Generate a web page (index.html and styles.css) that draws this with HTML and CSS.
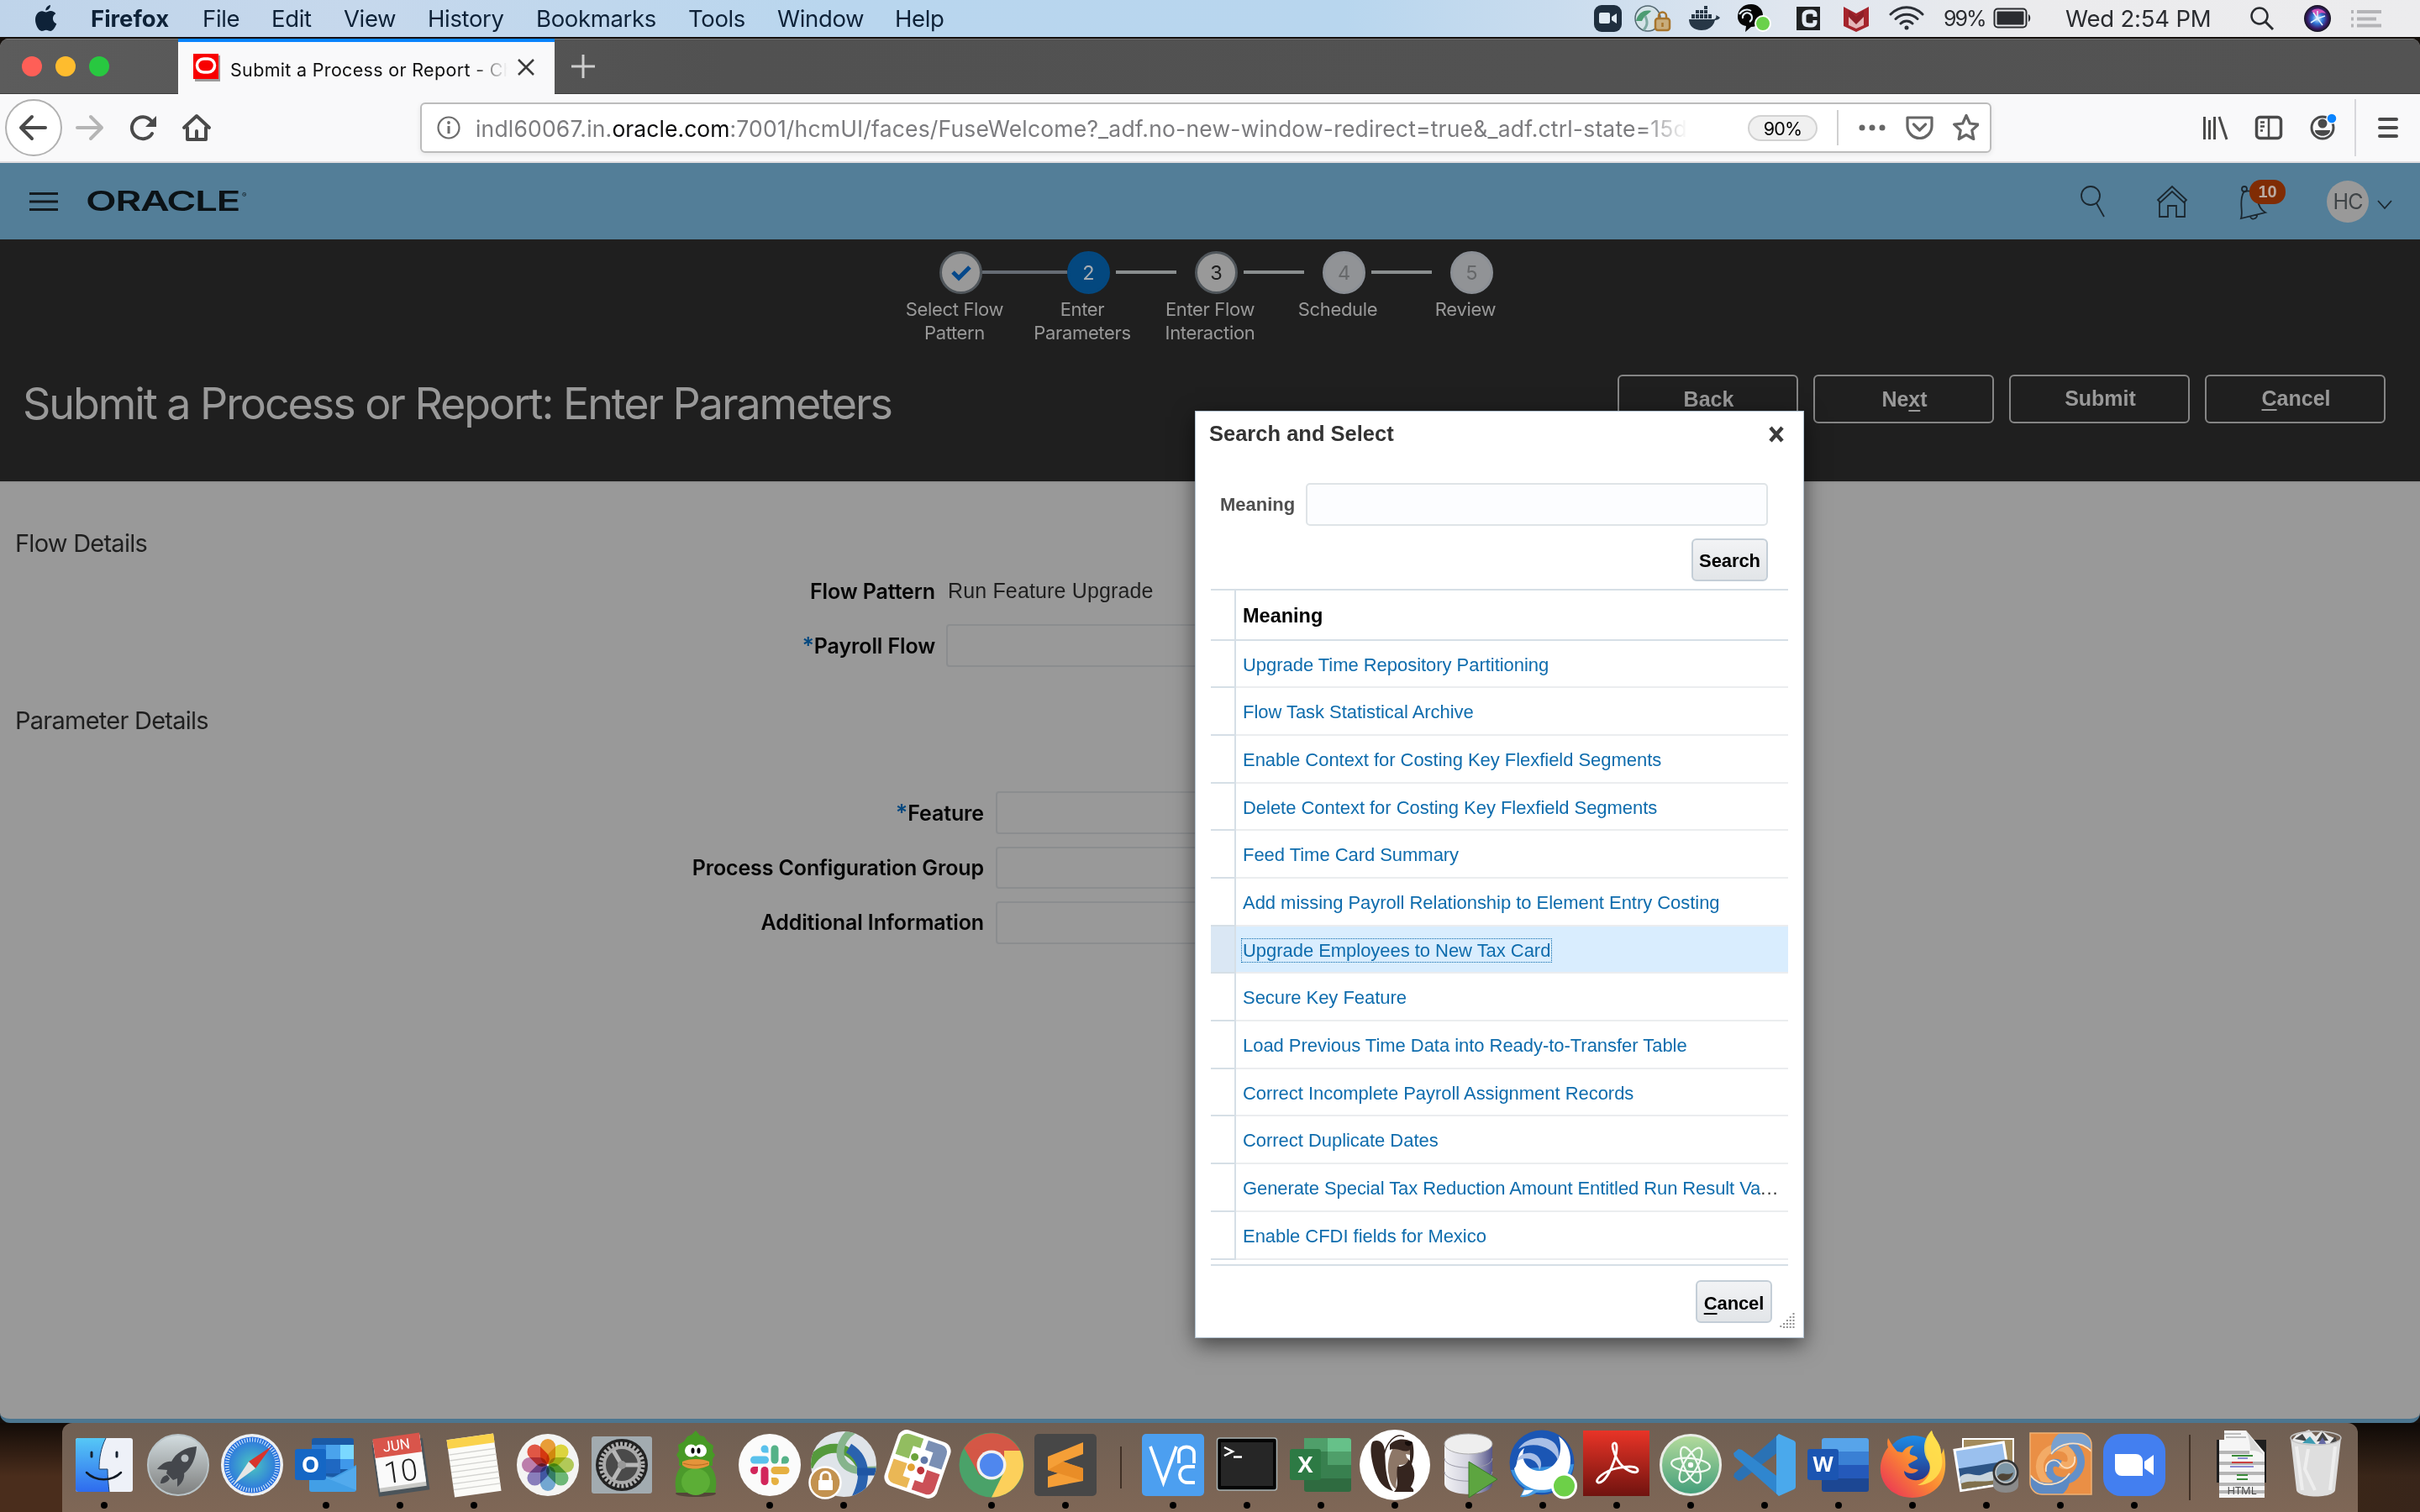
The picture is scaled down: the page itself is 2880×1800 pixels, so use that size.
FILE: index.html
```html
<!DOCTYPE html>
<html lang="en">
<head>
<meta charset="utf-8">
<title>Submit a Process or Report</title>
<link rel="stylesheet" href="styles.css">
</head>
<body>
<div class="desktop">

  <header class="menubar">
    <nav class="menus">
      <svg class="apple" width="28" height="34" viewBox="0 0 28 34"><path d="M19 1c.3 3-2.600 6.500-5.600 6.400C13 4.500 16 1.300 19 1zM13.800 9.600c1.300 0 3-1.600 5.600-1.500 2.500.1 4.600 1.200 5.900 3.200-5 3-4.200 10 1 12-1.500 4-4.200 8.600-7.200 8.700-2 0-2.700-1.300-5.200-1.300S10.600 32 8.800 32C4.800 32 1 24.500 1 18.600 1 12 5 8.400 9 8.300c2 0 3.600 1.300 4.800 1.300z" fill="#0e2238"/></svg>
      <b>Firefox</b><span>File</span><span>Edit</span><span>View</span><span>History</span><span>Bookmarks</span><span>Tools</span><span>Window</span><span>Help</span>
    </nav>
    <svg class="tray" width="400" height="44" viewBox="0 0 400 44">
      <rect x="7" y="6" width="33" height="32" rx="9" fill="#1f2f3f"/><rect x="13" y="15" width="13" height="13" rx="2" fill="#dfeaf3"/><path d="M28 20l6-4v12l-6-4z" fill="#dfeaf3"/>
      <circle cx="71" cy="22" r="15" fill="#d5e3e8" stroke="#52666f" stroke-width="1.500"/><path d="M57 25c2-9 9-14 18-12-3 4-8 5-11 12z" fill="#4d9c73"/><path d="M66 36c5-6 5-10 2-17" stroke="#7fa9a2" stroke-width="3" fill="none"/><rect x="80" y="22" width="17" height="14" rx="3" fill="#c8ad7c" stroke="#a8752c" stroke-width="2.500"/><path d="M84 22v-3a4.500 4.500 0 0 1 9 0v3M88.500 27v5" fill="none" stroke="#a8752c" stroke-width="2.500"/>
      <path d="M120 23h29c3 0 4-3 3-5 3 1 5 3 5 3-1 2-4 3-6 3-2 8-8 12-16 12-9 0-15-5-15-13zM123 17h4v5h-4zM128 17h4v5h-4zM133 17h4v5h-4zM138 17h4v5h-4zM143 17h4v5h-4zM128 12h4v4h-4zM133 12h4v4h-4zM138 12h4v4h-4zM138 7h4v4h-4z" fill="#273746"/>
      <path d="M178 20c0-9 7-15 16-15 8 0 14 6 14 13 0 8-6 14-14 14l-7 6 1-7c-6-1-10-5-10-11z" fill="#050505"/><path d="M180 17c3-5 9-7 14-4M184 22c-1-5 4-8 8-6s4 8 0 10" fill="none" stroke="#e3edf5" stroke-width="2"/><circle cx="208" cy="28" r="9" fill="#6ad14b" stroke="#fff" stroke-width="2"/>
      <path d="M248 8h28v28h-28z" fill="#1f2122"/><path d="M270 20v-3c0-2-2-3-4-3h-3c-4 0-6 2-6 5v6c0 3 2 5 6 5h3c2 0 4-1 4-3v-3" fill="none" stroke="#e4ebf3" stroke-width="5"/>
      <path d="M304 8l15 8 15-8v23l-15 7-15-7z" fill="#a5242c"/><path d="M310 17l9 7 9-7v13l-9 4-9-4z" fill="#e4b6b8"/><path d="M310 12l9 8 9-8v8l-9 9-9-9z" fill="#8f1f27"/>
      <g fill="none" stroke="#2b2f36" stroke-width="3" stroke-linecap="round"><path d="M360 17c11-11 27-11 38 0M366 22.500c7-7 19-7 26 0M372 28c4-4 10-4 14 0"/></g><circle cx="379" cy="33" r="2.500" fill="#2b2f36"/>
    </svg>
    <span class="pct">99%</span>
    <svg class="battery" width="46" height="26" viewBox="0 0 46 26"><rect x="1.500" y="1.500" width="38" height="22" rx="4" fill="none" stroke="#2a2c30" stroke-width="2"/><rect x="4.500" y="4.500" width="32" height="16" rx="1" fill="#2a2c30"/><path d="M42 8c3 1 3 8 0 9z" fill="#2a2c30"/></svg>
    <span class="clock">Wed 2:54 PM</span>
    <svg class="tray-end" width="170" height="44" viewBox="0 0 170 44"><circle cx="20" cy="19" r="9.500" fill="none" stroke="#2a2c30" stroke-width="2.500"/><path d="M27 26l9 9" stroke="#2a2c30" stroke-width="3"/>
      <defs><radialGradient id="siri"><stop offset="0" stop-color="#d9f4ff"/><stop offset=".4" stop-color="#2f76d8"/><stop offset=".75" stop-color="#3a1c6a"/><stop offset="1" stop-color="#14141c"/></radialGradient></defs>
      <circle cx="89" cy="22" r="16" fill="url(#siri)"/><path d="M82 13c6-5 14-2 17 3-6-2-10 0-10 6z" fill="#d053b8"/><path d="M89 22l6 8M89 22l-8 5M89 22l-5-7M89 22l9-3M89 22v-9" stroke="#dff2ff" stroke-width="1.500"/>
      <path d="M129 12h3v4h-3zM129 20.500h3v4h-3zM129 28.500h3v4h-3zM136 12h29v4h-29zM136 20.500h23v4h-23zM136 28.500h29v4h-29z" fill="#b4b4b7"/></svg>
  </header>

  <main class="window">
    <div class="tabbar">
      <div class="lights"><i class="red"></i><i class="amber"></i><i class="green"></i></div>
      <div class="tab">
        <svg width="32" height="34" viewBox="0 0 32 34"><path d="M2 2h30v31H2z" fill="#9c9c9c"/><path d="M0 0h30v30H0z" fill="#f80000"/><rect x="4.500" y="6" width="21" height="16" rx="8" fill="none" stroke="#fff" stroke-width="3.500"/></svg>
        <span class="tab-title">Submit a Process or Report - Ch</span>
        <svg class="tab-close" width="22" height="22" viewBox="0 0 22 22"><path d="M2 2l18 18M20 2L2 20" stroke="#3c3c3c" stroke-width="2.500"/></svg>
      </div>
      <svg class="plus" width="30" height="30" viewBox="0 0 30 30"><path d="M15 1v28M1 15h28" stroke="#cdcdcd" stroke-width="3"/></svg>
    </div>

    <div class="navbar">
      <svg class="nav-left" width="270" height="80" viewBox="0 0 270 80" fill="none" stroke="#4a4a4a" stroke-width="4" stroke-linecap="round" stroke-linejoin="round">
        <circle cx="40" cy="40" r="33" fill="#fff" stroke="#b1b1b1" stroke-width="2"/>
        <path d="M54 40H26M38 27L25 40l13 13"/>
        <path d="M92 40h28M108 27l13 13-13 13" stroke="#b5b5b5"/>
        <path d="M181 47a13 13 0 1 1-1-15"/><path d="M186 26v13h-13z" fill="#4a4a4a" stroke="none"/>
        <path d="M219 40l15-14 15 14M223 40v14h22V40M234 54v-10"/>
      </svg>
      <div class="urlbar">
        <svg width="30" height="30" viewBox="0 0 30 30"><circle cx="15" cy="15" r="12.500" fill="none" stroke="#6d6d6d" stroke-width="2.200"/><circle cx="15" cy="9" r="1.900" fill="#6d6d6d"/><path d="M15 13v9" stroke="#6d6d6d" stroke-width="3"/></svg>
        <span class="url">indl60067.in.<b>oracle.com</b>:7001/hcmUI/faces/FuseWelcome?_adf.no-new-window-redirect=true&amp;_adf.ctrl-state=15d</span>
        <span class="zoom">90%</span>
        <svg class="url-actions" width="170" height="60" viewBox="0 0 170 60" fill="none" stroke="#666" stroke-width="3.200" stroke-linejoin="round"><path d="M2 9v42" stroke="#d0d0d0" stroke-width="2"/><g fill="#666" stroke="none"><circle cx="31" cy="30" r="3.500"/><circle cx="43" cy="30" r="3.500"/><circle cx="55" cy="30" r="3.500"/></g><path d="M85 18h29v10a14.500 14.500 0 0 1-29 0zM92.500 26l7 7 7-7" stroke-linecap="round"/><path d="M155 15.500l4.300 9.500 10 1.200-7.500 7 2 10.300-8.800-5-8.800 5 2-10.300-7.500-7 10-1.200z"/></svg>
      </div>
      <svg class="nav-right" width="260" height="80" viewBox="0 0 260 80" fill="none" stroke="#4a4a4a" stroke-width="3">
        <path d="M3.500 27v27M9.500 31v23M15.500 27v27M21 27l9 27" stroke-width="3"/>
        <rect x="65.500" y="27.500" width="29" height="25" rx="4" stroke-width="3.500"/><path d="M80 28v24M70 33.500h5M70 38.500h5M70 43.500h3" stroke-width="2.500"/>
        <circle cx="144" cy="40" r="13"/><circle cx="144" cy="35" r="5.500" fill="#4a4a4a" stroke="none"/><path d="M135 43h18c0 9-18 9-18 0z" fill="#4a4a4a" stroke="none"/><circle cx="155" cy="29" r="6" fill="#0a84ff" stroke="#f9f9fa" stroke-width="1.500"/>
        <path d="M183 6v68" stroke="#d7d7db" stroke-width="2"/><path d="M212 30h20M212 40h20M212 50h20" stroke-width="4" stroke-linecap="round"/>
      </svg>
    </div>

    <div class="brandbar">
      <svg width="34" height="24" viewBox="0 0 34 24"><path d="M0 2.500h34M0 12h34M0 21.500h34" stroke="#141b20" stroke-width="3"/></svg>
      <span class="logo">ORACLE</span><span class="reg">®</span>
      <svg class="brand-icons" width="240" height="90" viewBox="5 2 240 90" fill="none" stroke="#1b272f" stroke-width="1.800">
        <circle cx="17" cy="40" r="11"/><path d="M24 49l9 16"/>
        <path d="M97 45l17-16 17 16-3 3-14-13-14 13zM99 47v18h10V52h10v13h10V47"/>
        <path d="M199 36c5-4 17 0 17 8 0 8 5 14 9 16l-29 7c3-8-3-20 3-31zM207 65c2 5 9 2 8-3"/><circle cx="200" cy="32" r="3"/>
      </svg>
      <span class="count">10</span>
      <span class="avatar">HC</span>
      <svg class="caret" width="20" height="12" viewBox="0 0 20 12"><path d="M2 1l8 9 8-9" fill="none" stroke="#1b272f" stroke-width="1.800"/></svg>
    </div>

    <section class="hero">
      <div class="markers">
        <span class="dot done"><svg width="26" height="20" viewBox="0 0 26 20"><path d="M3 9l7 7L23 3" fill="none" stroke="#05488a" stroke-width="5"/></svg></span><i class="link long"></i>
        <span class="dot now">2</span><i class="link"></i>
        <span class="dot">3</span><i class="link"></i>
        <span class="dot off">4</span><i class="link"></i>
        <span class="dot off">5</span>
      </div>
      <div class="labels"><span>Select Flow<br>Pattern</span><span>Enter<br>Parameters</span><span>Enter Flow<br>Interaction</span><span>Schedule</span><span>Review</span></div>
      <div class="titlebar">
        <h1>Submit a Process or Report: Enter Parameters</h1>
        <div class="actions"><span>Back</span><span>Ne<u>x</u>t</span><span class="up">Submit</span><span class="up"><u>C</u>ancel</span></div>
      </div>
    </section>

    <section class="page">
      <h2>Flow Details</h2>
      <div class="form flow">
        <label>Flow Pattern</label><span>Run Feature Upgrade</span>
        <label><em>*</em>Payroll Flow</label><div class="input"></div>
      </div>
      <h2 class="second">Parameter Details</h2>
      <div class="form params">
        <label><em>*</em>Feature</label><div class="input"></div>
        <label>Process Configuration Group</label><div class="input"></div>
        <label>Additional Information</label><div class="input"></div>
      </div>
    </section>
  </main>

  <footer class="dockrow">
    <div class="dock">
      <svg viewBox="0 0 88 106"><defs><linearGradient id="fi" x2="0" y2="1"><stop offset="0" stop-color="#56c8f6"/><stop offset="1" stop-color="#2e6bee"/></linearGradient></defs><rect x="10" y="18" width="68" height="64" rx="3" fill="#eef1f8"/><path d="M13 18h33c-6 12-8 24-8 37h10c0 9 1 18 2 27H13a3 3 0 0 1-3-3V21a3 3 0 0 1 3-3z" fill="url(#fi)"/><path d="M46 18c-6 12-8 24-8 37h10c0 9 1 18 2 27" fill="none" stroke="#1a3e68" stroke-width="1"/><path d="M29 35v5M59 35v5" stroke="#14202e" stroke-width="3" stroke-linecap="round"/><path d="M23 59c11 11 30 11 41 0" fill="none" stroke="#111a24" stroke-width="2.500" stroke-linecap="round"/><circle cx="44" cy="98" r="4"/></svg>
      <svg viewBox="0 0 88 106"><defs><linearGradient id="la" x2="0" y2="1"><stop offset="0" stop-color="#d3dde0"/><stop offset="1" stop-color="#7d7e7d"/></linearGradient></defs><circle cx="44" cy="50" r="36" fill="url(#la)" stroke="#b9c4c8" stroke-width="2"/><path d="M66 28c-14 1-25 8-30 18-6-1-12 3-17 9l12 1-1 4 8 8 5-2v10c6-4 9-11 8-16 9-7 14-18 15-32z" fill="#44474c"/><circle cx="52" cy="42" r="4.500" fill="#b4bbbe"/><path d="M31 62c-5 1-8 5-8 10 5 0 9-2 11-6z" fill="#44474c"/></svg>
      <svg viewBox="0 0 88 106"><defs><radialGradient id="sa"><stop offset="0" stop-color="#4cc6c0"/><stop offset="1" stop-color="#2a6fe0"/></radialGradient></defs><circle cx="44" cy="50" r="37" fill="#eef0f2"/><circle cx="44" cy="50" r="33.500" fill="url(#sa)"/><circle cx="44" cy="50" r="30" fill="none" stroke="#dff0ff" stroke-width="5" stroke-dasharray="1 2.140"/><path d="M67 28L40 46l8 8z" fill="#d8342c"/><path d="M22 73l18-27 8 8z" fill="#e6e6e4"/></svg>
      <svg viewBox="0 0 88 106"><rect x="27" y="18" width="50" height="62" rx="3" fill="#1a5aa6"/><path d="M27 26h17v34H27z" fill="#2a7bd4"/><path d="M44 26h17v17H44z" fill="#4aa3ec"/><path d="M61 26h16v17H61z" fill="#7ad8ff"/><path d="M44 43h17v17H44z" fill="#1f68c2"/><path d="M61 43h16v12H61z" fill="#3f98ea"/><path d="M24 58l26 8 30-16v29a3 3 0 0 1-3 3H27a3 3 0 0 1-3-3z" fill="#429fe6"/><path d="M36 62l44 18V52L56 65z" fill="#5db3f2" opacity=".6"/><rect x="7" y="31" width="37" height="37" rx="3" fill="#1567c5"/><text x="25.500" y="59" class="glyph" font-size="27">O</text><circle cx="44" cy="98" r="4"/></svg>
      <svg viewBox="0 0 88 106"><g transform="rotate(-8 44 50)"><path d="M14 22h61v62H14z" fill="#4b545a"/><path d="M16 17h56v62H16z" fill="#c9c9c6"/><path d="M16 17h56v57H16z" fill="#fafafa"/><path d="M16 15h56v23H16z" fill="#d9554b"/><text x="43" y="32" class="glyph cal" font-size="17">JUN</text><text x="44" y="70" class="glyph cal dark" font-size="36">10</text></g><circle cx="44" cy="98" r="4"/></svg>
      <svg viewBox="0 0 88 106"><g transform="rotate(-8 44 50)"><path d="M16 16h56v69H16z" fill="#fbfbf8"/><path d="M16 16h56v11H16z" fill="#fad24b"/><path d="M16 34h56M16 41h56M16 48h56M16 55h56M16 62h56M16 69h56M16 76h56" stroke="#d3d3d0" stroke-width="1.300"/></g><circle cx="44" cy="98" r="4"/></svg>
      <svg viewBox="0 0 88 106"><circle cx="44" cy="50" r="37" fill="#f4f4f3"/><g class="petals"><rect x="35" y="19" width="18" height="30" rx="9" fill="#f3a43a"/><rect x="35" y="19" width="18" height="30" rx="9" fill="#e6de40" transform="rotate(45 44 50)"/><rect x="35" y="19" width="18" height="30" rx="9" fill="#b9d25c" transform="rotate(90 44 50)"/><rect x="35" y="19" width="18" height="30" rx="9" fill="#72bf7c" transform="rotate(135 44 50)"/><rect x="35" y="19" width="18" height="30" rx="9" fill="#78afdc" transform="rotate(180 44 50)"/><rect x="35" y="19" width="18" height="30" rx="9" fill="#8f84c4" transform="rotate(225 44 50)"/><rect x="35" y="19" width="18" height="30" rx="9" fill="#c584b4" transform="rotate(270 44 50)"/><rect x="35" y="19" width="18" height="30" rx="9" fill="#ea5b48" transform="rotate(315 44 50)"/></g></svg>
      <svg viewBox="0 0 88 106"><rect x="8" y="16" width="72" height="68" rx="3" fill="#a2abb0"/><circle cx="44" cy="50" r="31" fill="#232323"/><circle cx="44" cy="50" r="25" fill="none" stroke="#b3b3b3" stroke-width="5" stroke-dasharray="3 2.230"/><circle cx="44" cy="50" r="21" fill="#4a4a4a" stroke="#aaa" stroke-width="4"/><path d="M44 50h20M44 50L34 33M44 50L34 67" stroke="#b7b7b7" stroke-width="5"/><circle cx="44" cy="50" r="5" fill="#999"/></svg>
      <svg viewBox="0 0 88 106"><ellipse cx="44" cy="84" rx="24" ry="4" fill="#3a3026" opacity=".6"/><path d="M28 50c-8 8-10 20-7 33h46c3-13 1-25-7-33z" fill="#4b9a2b"/><path d="M44 9l5 6 5 1 4 6 7 5-1 7 3 4-3 5v8H24v-8l-3-5 3-5-1-7 7-4 4-6 5-2z" fill="#479925"/><ellipse cx="44" cy="70" rx="17" ry="16" fill="#5cae36"/><circle cx="38.500" cy="33" r="7.500" fill="#fff"/><circle cx="49.500" cy="33" r="7.500" fill="#fff"/><ellipse cx="40.500" cy="33" rx="2" ry="3.500"/><ellipse cx="47.500" cy="33" rx="2" ry="3.500"/><path d="M28 46c8-4 24-4 32 0v4c-6 5-26 7-32 0z" fill="#e5943a"/><path d="M29 48c10 3 20 3 30 0" stroke="#b46a20" fill="none"/></svg>
      <svg viewBox="0 0 88 106"><circle cx="44" cy="50" r="37" fill="#fbfbfb"/><g stroke-width="9" stroke-linecap="round"><path d="M25.500 44h13" stroke="#5ac1ec"/><path d="M50 31v13" stroke="#55b288"/><path d="M50 56.500h13" stroke="#e6b041"/><path d="M38 56.500v13" stroke="#d2265b"/></g><path d="M42.500 35.500h-4.500a4.500 4.500 0 1 1 4.500-4.500z" fill="#5ac1ec"/><path d="M58 48.500V44a4.500 4.500 0 1 1 4.500 4.500z" fill="#55b288"/><path d="M46 65h4.500a4.500 4.500 0 1 1-4.500 4.500z" fill="#e6b041"/><path d="M30 52v4.500A4.500 4.500 0 1 1 25.500 52z" fill="#d2265b"/><circle cx="44" cy="98" r="4"/></svg>
      <svg viewBox="0 0 88 106"><defs><clipPath id="ci"><circle cx="44" cy="49" r="39"/></clipPath></defs><circle cx="44" cy="49" r="39" fill="#dfe4e9"/><g clip-path="url(#ci)" fill="none"><path d="M2 52c14-30 52-30 66 6" stroke="#559a3c" stroke-width="11"/><path d="M57 8c-22 12-24 44 2 48 10 1 16 0 28 0" stroke="#86b48c" stroke-width="9"/><path d="M50 30c20 12 22 36 8 62" stroke="#2a62ae" stroke-width="12"/><path d="M60 58h28" stroke="#1f56a4" stroke-width="9"/></g><circle cx="22" cy="71" r="18.500" fill="#c3924f" stroke="#fff" stroke-width="2.500"/><rect x="14" y="68" width="17" height="12" rx="1" fill="#fff"/><path d="M17 68v-4a5.500 5.500 0 0 1 11 0v4" fill="none" stroke="#fff" stroke-width="3"/><circle cx="44" cy="98" r="4"/></svg>
      <svg viewBox="0 0 88 106"><g transform="rotate(19 44 49)"><rect x="11" y="14" width="66" height="70" rx="11" fill="#fff"/><path d="M24 18h17v12h-9v16H15V27a9 9 0 0 1 9-9z" fill="#92bd60"/><path d="M47 18h17a9 9 0 0 1 9 9v19H57V30H47z" fill="#7a8fb4"/><path d="M15 52h17v16h9v12H24a9 9 0 0 1-9-9z" fill="#eab755"/><path d="M57 52h16v19a9 9 0 0 1-9 9H47V68h10z" fill="#cb5057"/><circle cx="38" cy="42" r="4.500" fill="#6ba33b"/><circle cx="50" cy="42" r="4.500" fill="#6078a8"/><circle cx="38" cy="55" r="4.500" fill="#e2a234"/><circle cx="50" cy="55" r="4.500" fill="#bd343c"/></g></svg>
      <svg viewBox="0 0 88 106"><circle cx="44" cy="50" r="38.500" fill="#4aa269"/><path d="M44 50L11.500 30A38.500 38.500 0 0 1 78 33z" fill="#d45746"/><path d="M11.500 30l18 32L44 50V33z" fill="#d45746"/><path d="M78 33a38.500 38.500 0 0 1-34 55.500L59 58V33z" fill="#fcd05b"/><circle cx="44" cy="50" r="17.500" fill="#f1f1f1"/><circle cx="44" cy="50" r="14" fill="#4f87ee"/><circle cx="44" cy="98" r="4"/></svg>
      <svg viewBox="0 0 88 106"><rect x="7" y="13" width="74" height="74" rx="5" fill="#474747"/><path d="M65 23L23 40v16l42 13V54L41 46l24-9z" fill="#f59f37"/><path d="M65 54v15L23 77V64l26-9z" fill="#f59f37"/><path d="M23 56l42 13V54L41 46z" fill="#e98d27"/><circle cx="44" cy="98" r="4"/></svg>
      <i class="sep"></i>
      <svg viewBox="0 0 88 106"><rect x="7" y="13" width="74" height="74" rx="5" fill="#4c9ff0"/><g fill="none" stroke="#fff" stroke-width="3.800"><path d="M17 28l15.500 43L48 28M51 48V36c0-10 18-10 18 0v12M70 52h-9c-12 0-12 19 0 19h9"/></g><circle cx="44" cy="98" r="4"/></svg>
      <svg viewBox="0 0 88 106"><rect x="8.500" y="18" width="71" height="62" rx="3" fill="#050505" stroke="#a9b3b3" stroke-width="1.500"/><path d="M13 23h62v52H13z" fill="#262626"/><path d="M17 29l10 5-10 5M28 40.500h10" fill="none" stroke="#fff" stroke-width="2.500"/><circle cx="44" cy="98" r="4"/></svg>
      <svg viewBox="0 0 88 106"><rect x="24" y="18" width="56" height="64" rx="3" fill="#2f6b40"/><path d="M24 18h28v16H24zM52 34h28v16H52z" fill="#4f9f6a"/><path d="M52 18h25a3 3 0 0 1 3 3v13H52z" fill="#66c189"/><path d="M24 34h28v32H24zM52 50h28v16H52z" fill="#38804f"/><rect x="7" y="31" width="37" height="37" rx="3" fill="#2d7a44"/><text x="25.500" y="59" class="glyph" font-size="27">X</text><circle cx="44" cy="98" r="4"/></svg>
      <svg viewBox="0 0 88 106"><circle cx="44" cy="50" r="42" fill="#fff"/><path d="M18 22c7-3 13 1 14 11 1 13 0 34 10 48-9-2-16-9-20-19-6-15-9-35-4-40z" fill="#35251f"/><path d="M44 27c-7 9-10 24-7 36 1 8 5 14 9 16-2-10 3-18 3-29 9 1 15-6 16-14-4-9-13-13-21-9z" fill="#8d7767"/><path d="M38 26c5-7 18-9 27-3 2 9 2 18-1 26 5 10 4 19-1 27 2 2 4 3 3 6H43c7-6 2-18 4-30 11 0 16-8 15-20-8 5-13-4-24 0z" fill="#35251f"/><path d="M34 66c-6-16-5-34 6-46 5-5 10-6 15-4" fill="none" stroke="#35251f" stroke-width="1.500"/><path d="M57 37l5 1v7l-4-4z" fill="#fff"/><path d="M56 22h8c1 6-5 7-8 3z" fill="#150d0a"/><circle cx="44" cy="98" r="4"/></svg>
      <svg viewBox="0 0 88 106"><defs><linearGradient id="db"><stop offset="0" stop-color="#f1f1f4"/><stop offset=".5" stop-color="#d2d2de"/><stop offset="1" stop-color="#55558a"/></linearGradient></defs><path d="M15 26v46c0 17 57 17 57 0V26z" fill="url(#db)"/><ellipse cx="43.500" cy="25" rx="28.500" ry="12" fill="#eee" stroke="#aaa"/><path d="M15 42c0 15 57 15 57 0M15 58c0 15 57 15 57 0" fill="none" stroke="#9a9aa8"/><path d="M44 46l34 21-34 22z" fill="#5da540" stroke="#3a7a2a"/><circle cx="44" cy="98" r="4"/></svg>
      <svg viewBox="0 0 88 106"><circle cx="43" cy="47" r="38.500" fill="#1b56b4"/><path d="M6 56a38.500 38.500 0 0 0 75-7z" fill="#3b93e0"/><path d="M22 78l-5 10c8 1 17-3 24-8z" fill="#4a9fe6"/><path d="M63 16c18 12 19 42 1 57-19 14-49 6-54-19 5-3 2-18 12-24-6 16 6 28 20 27 16-2 28-18 21-41z" fill="#fff"/><path d="M15 31c8-14 32-18 43-7 5 6 6 13 4 20-5-14-27-24-47-13z" fill="#a9bfe6"/><path d="M13 46c2-11 22-15 28-2 2 5 1 9-1 12-2-14-18-17-27-10z" fill="#a9bfe6"/><path d="M22 80l-3 6c6 0 11-3 14-6z" fill="#fff"/><circle cx="69.500" cy="75" r="14" fill="#6dd048" stroke="#fff" stroke-width="3"/><circle cx="44" cy="98" r="4"/></svg>
      <svg viewBox="0 0 88 106"><defs><linearGradient id="ad" x2="0" y2="1"><stop offset="0" stop-color="#e93427"/><stop offset="1" stop-color="#70130f"/></linearGradient></defs><path d="M4 9h79v78H4z" fill="url(#ad)"/><path d="M22 71c-6-3 8-14 22-17s26-3 25 3c-2 5-17-1-24-13-5-9-8-19-4-20s4 9 0 21-12 27-19 26z" fill="none" stroke="#fff" stroke-width="2.800"/><circle cx="44" cy="98" r="4"/></svg>
      <svg viewBox="0 0 88 106"><defs><linearGradient id="at" x2="0" y2="1"><stop offset="0" stop-color="#b5db9c"/><stop offset="1" stop-color="#429e7a"/></linearGradient></defs><circle cx="44" cy="50" r="35.500" fill="url(#at)" stroke="#e9ece6" stroke-width="3"/><g fill="none" stroke="#f3faf3" stroke-width="2.200"><ellipse cx="44" cy="50" rx="23" ry="8" transform="rotate(6 44 50)"/><ellipse cx="44" cy="50" rx="23" ry="8" transform="rotate(66 44 50)"/><ellipse cx="44" cy="50" rx="23" ry="8" transform="rotate(120 44 50)"/></g><circle cx="44" cy="50" r="3.200" fill="#fff"/><circle cx="44" cy="98" r="4"/></svg>
      <svg viewBox="0 0 88 106"><path d="M61 13L8 60l-1 4 6 5 4-1 44-34z" fill="#2a72b5"/><path d="M8 40l-1-4 6-5 4 1 44 33v22z" fill="#2f86cf"/><path d="M61 13l18 8a4 4 0 0 1 2 4v50a4 4 0 0 1-2 4l-18 8-3-3V16z" fill="#4aa9ec"/><circle cx="44" cy="98" r="4"/></svg>
      <svg viewBox="0 0 88 106"><rect x="24" y="18" width="56" height="64" rx="3" fill="#1c4793"/><path d="M24 34V21a3 3 0 0 1 3-3h50a3 3 0 0 1 3 3v13z" fill="#57a4ea"/><path d="M24 34h56v16H24z" fill="#3a80d4"/><path d="M24 50h56v16H24z" fill="#2459ba"/><rect x="7" y="31" width="37" height="37" rx="3" fill="#1b55b2"/><text x="25.500" y="58" class="glyph" font-size="25">W</text><circle cx="44" cy="98" r="4"/></svg>
      <svg viewBox="0 0 88 106"><defs><linearGradient id="ff" x1="1" y1="0" x2="0" y2="1"><stop offset="0" stop-color="#ffdf43"/><stop offset=".5" stop-color="#fb8a32"/><stop offset="1" stop-color="#e8285c"/></linearGradient><linearGradient id="fb" x2="0" y2="1"><stop offset="0" stop-color="#1c8ce8"/><stop offset="1" stop-color="#2a1d6c"/></linearGradient></defs><circle cx="45" cy="49" r="34" fill="url(#fb)"/><path d="M15 18c-2 6 0 11 0 11C5 42 2 60 12 74c14 20 50 20 65-1 8-13 7-28 4-43-1 4-2 6-3 7 0-14-9-18-11-28-8 8-10 24-3 37 3 10-2 20-13 22-10 1-17-4-17-11 5 4 13 4 17-1-3-2-11 0-12-7l11-6c1-4-7-4-9-6-1-4 2-8 5-10-7 0-11 3-14 8l-6-1c-4-4-7-9-11-16z" fill="url(#ff)"/><path d="M67 9c-9 8-13 24-4 37 6 12-3 24-13 28 20 0 34-18 28-37 0-14-9-18-11-28z" fill="#ffe34f" opacity=".85"/><circle cx="44" cy="98" r="4"/></svg>
      <svg viewBox="0 0 88 106"><path d="M15 18h62v46H15z" fill="#fff"/><path d="M17 20h58v42H17z" fill="#a38b5c"/><g transform="rotate(-9 38 52)"><path d="M8 26h62v52H8z" fill="#fff"/><path d="M11 29h56v46H11z" fill="#9ac0ee"/><path d="M11 50h56v25H11z" fill="#2d5586"/><path d="M11 60c12-7 18 5 29 1s16 2 27 0v14H11z" fill="#c9d5dc"/><path d="M11 68c15-3 25 5 56 2v5H11z" fill="#80704c"/></g><path d="M52 58h30v16c0 12-30 12-30 0z" fill="#8a8a8a"/><circle cx="67" cy="59" r="14" fill="#7d96a6" stroke="#353535" stroke-width="3"/><circle cx="67" cy="59" r="12" fill="none" stroke="#ccc" stroke-width="1.500"/><path d="M57 64c5-8 10 0 19-5-2 9-14 14-19 5z" fill="#4f4436"/><circle cx="44" cy="98" r="4"/></svg>
      <svg viewBox="0 0 88 106"><defs><clipPath id="sw"><path d="M8 12h59a14 14 0 0 1 14 14v59H22A14 14 0 0 1 8 71z"/></clipPath></defs><g clip-path="url(#sw)" fill="none"><path d="M8 12h73v73H8z" fill="#ea8f45"/><path d="M44 49c-8-4-14-1-13 8 2 14 22 16 32 4s6-30-8-36" stroke="#6490c8" stroke-width="9"/><path d="M44 49c8 4 14 1 13-8-2-14-22-16-32-4s-6 30 8 36" stroke="#f3ab66" stroke-width="9"/><path d="M34 38c-4-14 4-26 18-30h34v28c-12-14-34-16-52 2z" fill="#7aa1cf"/><path d="M54 60c4 14-4 26-18 30H4V54c8 20 34 24 50 6z" fill="#5c8ac4"/><path d="M81 34C66 18 42 24 33 37M8 62c14 18 38 12 47-2M44 49c-6-9-19-4-17 9M44 49c6 9 19 4 17-9" stroke="#fde1c2" stroke-width="1.800"/></g><path d="M8 12h59a14 14 0 0 1 14 14v59H22A14 14 0 0 1 8 71z" fill="none" stroke="#f0b173" stroke-width="1.500"/><circle cx="44" cy="98" r="4"/></svg>
      <svg viewBox="0 0 88 106"><rect x="7" y="13" width="74" height="74" rx="21" fill="#437ff0"/><path d="M21 37h25a8 8 0 0 1 8 8v18H29a8 8 0 0 1-8-8zM56 46l11-8v24l-11-8z" fill="#fff"/><circle cx="44" cy="98" r="4"/></svg>
      <i class="sep tall"></i>
      <svg viewBox="0 0 88 106"><path d="M14 20h59v51H14z" fill="#1e1e1e"/><path d="M23 9h26l22 26v54H17V20h6z" fill="#f5f5f5"/><path d="M49 9l22 30c-5-5-12-7-17-6 0-9-2-17-5-24z" fill="#d8d8d8"/><path d="M17 35h36M17 48h54M17 60h54M17 73h54M17 82h54" stroke="#b5b5b5" stroke-width="4"/><path d="M23 13h20M25 17h24" stroke="#888"/><path d="M32 39h25M38 62h13M38 67h13" stroke="#3a8a3a" stroke-width="1.800"/><path d="M32 47h25" stroke="#c33" stroke-width="1.800"/><path d="M30 52h28M39 42h12" stroke="#6a6ac8" stroke-width="1.500"/><text x="44" y="85" class="glyph html" font-size="13">HTML</text></svg>
      <svg viewBox="0 0 88 106"><path d="M16 20l5-6 8-3 7-3 8 8 7-7 8 6 7 3 5 5-5 8H20z" fill="#e9e9e9"/><path d="M19 19l9-6 6 9zM45 22l7-11 7 10zM60 25l7-9 3 8z" fill="#454545"/><path d="M28 24l9-8 7 9z" fill="#3c9ab0"/><path d="M47 25l5-8 5 9z" fill="#6468a4"/><path d="M14 18c0 11 60 11 60 0l-7 62c-2 10-44 10-46 0z" fill="#dedede"/><path d="M21 28l7 52M67 28l-6 52M35 31l-4 24 12 25" fill="none" stroke="#f5f5f5" stroke-width="4" opacity=".7"/><ellipse cx="44" cy="18" rx="30" ry="8" fill="none" stroke="#c5c5c5" stroke-width="1.500"/></svg>
    </div>
  </footer>

  <div class="dialog">
    <div class="dlg-head"><b>Search and Select</b><svg width="18" height="20" viewBox="0 0 18 20"><path d="M2 2l14 16M16 2L2 18" stroke="#3b3b3b" stroke-width="4.500"/></svg></div>
    <div class="dlg-search"><label>Meaning</label><div class="field"></div></div>
    <div class="dlg-go"><span class="btn">Search</span></div>
    <div class="list">
      <div class="row head"><i></i><b>Meaning</b></div>
      <div class="row"><i></i><span>Upgrade Time Repository Partitioning</span></div>
      <div class="row"><i></i><span>Flow Task Statistical Archive</span></div>
      <div class="row"><i></i><span>Enable Context for Costing Key Flexfield Segments</span></div>
      <div class="row"><i></i><span>Delete Context for Costing Key Flexfield Segments</span></div>
      <div class="row"><i></i><span>Feed Time Card Summary</span></div>
      <div class="row"><i></i><span>Add missing Payroll Relationship to Element Entry Costing</span></div>
      <div class="row picked"><i></i><span><a>Upgrade Employees to New Tax Card</a></span></div>
      <div class="row"><i></i><span>Secure Key Feature</span></div>
      <div class="row"><i></i><span>Load Previous Time Data into Ready-to-Transfer Table</span></div>
      <div class="row"><i></i><span>Correct Incomplete Payroll Assignment Records</span></div>
      <div class="row"><i></i><span>Correct Duplicate Dates</span></div>
      <div class="row"><i></i><span class="tight">Generate Special Tax Reduction Amount Entitled Run Result Va<small>...</small></span></div>
      <div class="row"><i></i><span>Enable CFDI fields for Mexico</span></div>
    </div>
    <div class="dlg-foot"><span class="btn"><u>C</u>ancel</span><svg width="18" height="18" viewBox="0 0 18 18"><path d="M16.500 0v18M12.700 4v14M8.900 8v10M5.100 12v6M1.300 15v3" stroke="#8f8f8f" stroke-width="2" stroke-dasharray="2 2"/></svg></div>
  </div>
</div>
</body>
</html>
```
FILE: styles.css
```css
* { box-sizing: border-box; }
body { margin: 0; width: 2880px; height: 1800px; overflow: hidden; background: #140f0c; font-family: Inter, sans-serif; }
svg { display: block; flex: none; }
.desktop { position: relative; display: flex; flex-direction: column; height: 1800px; }

/* System menu bar */
.menubar { display: flex; align-items: center; height: 44px; flex: none; font-size: 27.5px; line-height: 43px; color: #0e2238; letter-spacing: -0.35px; white-space: nowrap;
  background: linear-gradient(90deg, #bfd4ea 0, #c6d8ec 420px, #b9d6ee 1000px, #b8d6ee 1600px, #c9dcee 1850px, #dfe6ef 2120px, #ebebed 2420px, #ececee 2880px); }
.menus { display: grid; align-items: center; grid-template-columns: 67px 133px 82px 86px 100px 129px 181px 106px 140px 100px; padding-left: 41px; width: 1890px; }
.menus b { letter-spacing: 0; }
.tray { margin-right: 23px; }
.pct, .clock { color: #2a2c30; letter-spacing: -0.2px; }
.pct { width: 59px; font-size: 25px; letter-spacing: -2px; }
.battery { margin-right: 40px; }
.clock { width: 211px; }

/* Browser window */
.window { height: 1648px; margin-top: 2px; flex: none; display: flex; flex-direction: column; border-radius: 10px 10px 12px 12px; overflow: hidden; background: #999; border-bottom: 5px solid #4c7690; }
.tabbar { height: 66px; flex: none; display: flex; align-items: center; background: linear-gradient(90deg, #5c5c5c, #515151 30%, #535353); border-top: 1px solid #777; border-bottom: 1px solid #3c3c3c; }
.lights { display: flex; gap: 16px; padding-left: 26px; width: 212px; }
.lights i { width: 24px; height: 24px; border-radius: 50%; }
.red { background: #fe5f57; }
.amber { background: #febc2e; }
.green { background: #28c840; }
.tab { width: 448px; height: 66px; margin: -1px 0; flex: none; display: flex; align-items: center; padding: 0 0 0 18px; background: #f9f9fa; border-top: 4px solid #0a84ff; }
.tab-title { width: 338px; margin-left: 12px; font-size: 21.5px; letter-spacing: .32px; color: #111; white-space: nowrap; -webkit-mask-image: linear-gradient(90deg, #000 288px, transparent 330px); mask-image: linear-gradient(90deg, #000 288px, transparent 330px); line-height: 34px; padding-top: 3px; }
.tab-close { margin-left: 3px; margin-top: -2px; }
.plus { margin-left: 19px; }
.navbar { height: 82px; flex: none; display: flex; align-items: center; background: #f9f9fa; border-bottom: 2px solid #e0dde0; }
.nav-left { margin-right: 230px; }
.urlbar { display: flex; align-items: center; width: 1870px; height: 60px; padding-left: 17px; background: #fff; border: 2px solid #bcbcbc; border-radius: 6px; box-shadow: 0 2px 6px rgba(0,0,0,.08); }
.url { width: 1450px; margin-left: 17px; font-size: 26.5px; letter-spacing: .18px; color: #7b7b7e; white-space: nowrap; -webkit-mask-image: linear-gradient(90deg, #000 1385px, transparent 1443px); mask-image: linear-gradient(90deg, #000 1385px, transparent 1443px); line-height: 40px; padding-top: 2px; }
.url b { font-weight: 400; color: #0c0c0d; letter-spacing: .05px; }
.zoom { width: 83px; height: 31px; margin-left: 64px; border: 2px solid #d2d2d2; border-radius: 16px; background: #f0f0f0; font-size: 21.5px; line-height: 29px; text-align: center; letter-spacing: -.8px; flex: none; }
.url-actions { margin-left: 22px; }
.nav-right { margin-left: 250px; }

/* Application header */
.brandbar { height: 91px; flex: none; position: relative; display: flex; align-items: center; background: #537e98; padding-left: 35px; }
.logo { width: 186px; margin-left: 33px; font-size: 32.500px; line-height: 24px; font-weight: 600; letter-spacing: -1px; color: #0b1216; transform: scaleX(1.47); transform-origin: 0 50%; }
.reg { width: 8px; margin-top: -16px; font-size: 8px; color: #0b1216; }
.brand-icons { margin-left: 2180px; }
.count { position: absolute; left: 2677px; top: 20px; width: 43px; height: 29px; border-radius: 14px; background: #802c04; color: #b9aaa2; font: 700 20px/29px "Liberation Sans", sans-serif; text-align: center; }
.avatar { width: 50px; height: 50px; margin-left: 53px; border-radius: 50%; background: #999; color: #3f4447; font-size: 25px; line-height: 50px; letter-spacing: -1px; text-align: center; }
.caret { margin: 8px 0 0 9px; }

.hero { height: 288px; flex: none; display: flex; flex-direction: column; background: #1f1f1f; padding-top: 14px; color: #999; }
.markers { display: flex; align-items: center; padding-left: 1118px; height: 51px; }
.dot { display: flex; align-items: center; justify-content: center; width: 51px; height: 51px; flex: none; border-radius: 50%; background: #999; border: 3px solid #50565b; color: #1f1f1f; font-size: 23.5px; }
.now { background: #04487f; border-color: #04487f; color: #a8adb2; }
.off { background: #919396; border-color: #8b8f95; color: #66686a; }
.link { width: 72px; height: 4px; margin: -2px 22px 0 7px; background: #8a8e8f; }
.link.long { width: 101px; margin: -2px 0 0; background: #666c74; }
.labels { display: grid; grid-template-columns: repeat(5, 152px); padding-left: 1060px; height: 54px; margin-top: 5px; font-size: 22px; line-height: 27.5px; letter-spacing: -.35px; text-align: center; }
.titlebar { display: flex; justify-content: space-between; margin-top: 37px; padding: 0 41px 0 27px; }
h1 { margin: 6px 0 0 0; font-size: 52px; line-height: 58px; font-weight: 400; letter-spacing: -2.06px; }
.actions { display: flex; gap: 18px; }
.actions span { width: 215px; height: 58px; padding-left: 2px; border: 2px solid #858585; border-radius: 6px; text-align: center; font: 700 25px/55px "Liberation Sans", sans-serif; }
.actions .up { line-height: 53px; }
u { text-decoration-thickness: 2px; text-underline-offset: 4px; }

.page { flex: 1; display: flex; flex-direction: column; padding-top: 52px; border-top: 2px solid #939393; }
h2 { margin: 0 0 11px 18px; height: 40px; font-size: 29px; line-height: 40px; font-weight: 400; letter-spacing: -.75px; color: #1f1f1f; }
h2.second { margin: 44px 0 64px 18px; }
.form { display: grid; justify-content: start; align-items: center; }
.flow { grid-template-columns: 1113px 600px; column-gap: 13px; row-gap: 14px; grid-auto-rows: 51px; }
.params { grid-template-columns: 1171px 600px; column-gap: 14px; row-gap: 15px; grid-auto-rows: 50.500px; }
.form label { text-align: right; font-size: 25px; font-weight: 600; letter-spacing: -.12px; color: #050505; }
.form span { font: 25px "Liberation Sans", sans-serif; letter-spacing: .15px; color: #1f1f1f; padding-left: 2px; }
.form em { font-style: normal; color: #04487f; font-size: 27px; }
.input { height: 100%; border: 2px solid #8b8d8f; border-radius: 4px; }

/* Dock */
.dockrow { height: 106px; flex: none; display: flex; padding: 0 74px; background: linear-gradient(180deg, rgba(0,0,0,.75), transparent 60%), linear-gradient(90deg, #4a2d1c 0, #4a2d1c 74px, #3a2618 2790px, #38251a 2880px); }
.dock { width: 2732px; height: 106px; display: flex; padding-left: 6px; border-radius: 12px 12px 0 0; background: linear-gradient(180deg, #6f5f53, #7f6756); }
.dock svg { width: 88px; height: 106px; }
.petals rect { mix-blend-mode: multiply; }
.sep { width: 2px; height: 50px; margin: 28px 17px 0 21px; background: #403025; }
.sep.tall { height: 78px; margin-top: 14px; }
.glyph { fill: #fff; font-family: "Open Sans", sans-serif; font-weight: 700; text-anchor: middle; }
.glyph.cal { font-family: Roboto, sans-serif; font-weight: 400; }
.glyph.dark { fill: #222; font-weight: 300; }
.glyph.html { fill: #444; font-weight: 400; }

/* Search dialog */
.dialog { position: absolute; left: 1422px; top: 489px; width: 725px; height: 1104px; display: flex; flex-direction: column; background: #fff; border: 1px solid #b3c3d1; box-shadow: 0 8px 24px rgba(0,0,0,.55); font-family: "Liberation Sans", sans-serif; color: #333; }
.dlg-head { display: flex; justify-content: space-between; align-items: center; height: 53px; padding: 0 23px 0 16px; font-size: 25.500px; }
.dlg-search { display: flex; align-items: center; height: 51px; margin-top: 32px; }
.dlg-search label { width: 131px; padding-left: 29px; padding-top: 1px; font-size: 22px; font-weight: 700; color: #4f4f4f; }
.field { width: 550px; height: 51px; border: 2px solid #dfe4e7; border-radius: 5px; background: #fcfdff; }
.dlg-go { display: flex; justify-content: flex-end; margin: 15px 42px 9px 0; }
.btn { width: 91px; height: 51px; border: 2px solid #c4ced7; border-radius: 6px; background: linear-gradient(180deg, #f2f3f5, #e2e5e8); color: #000; font-size: 22px; line-height: 50px; font-weight: 700; text-align: center; letter-spacing: -.1px; }
.dlg-foot .btn { line-height: 52px; }
.list { width: 687px; margin-left: 18px; height: 806px; border-top: 2px solid #d6dfe6; border-bottom: 2px solid #d6dfe6; font-size: 22px; line-height: 26px; }
.row { display: flex; height: 56.700px; }
.row i { width: 30px; flex: none; border-right: 2px solid #d6dfe6; border-bottom: 2px solid #d6dfe6; }
.row span, .row b { flex: 1; padding: 16px 0 0 8px; border-bottom: 2px solid #ebedef; color: #0e6cad; white-space: nowrap; letter-spacing: -.04px; }
.row b { padding-top: 17px; font-size: 23.500px; color: #000; border-color: #d6dfe6; letter-spacing: 0; }
.row.head { height: 59.600px; }
.row .tight { letter-spacing: -.09px; }
.tight small { font-size: 22px; color: #333; letter-spacing: 1px; }
.picked { background: #d9edfe; }
.picked i { background: #dae7f4; }
.picked a { outline: 1px dotted #0e6cad; outline-offset: 1px; }
.dlg-foot { display: flex; justify-content: flex-end; gap: 9px; margin: 17px 10px 0 0; }
.dlg-foot svg { margin-top: 39px; }
```
